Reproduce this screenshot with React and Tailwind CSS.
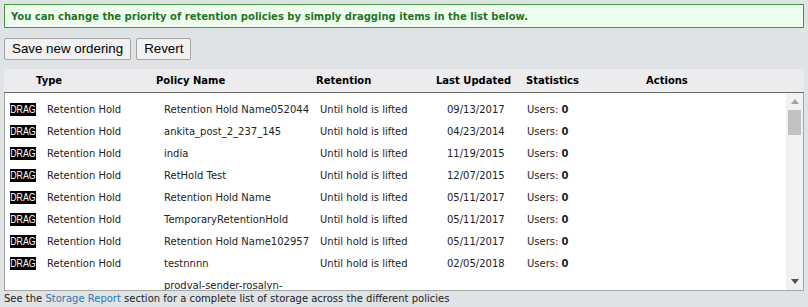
import React from "react";

const visibleRows = [
  { name: "Retention Hold Name052044", date: "09/13/2017" },
  { name: "ankita_post_2_237_145", date: "04/23/2014" },
  { name: "india", date: "11/19/2015" },
  { name: "RetHold Test", date: "12/07/2015" },
  { name: "Retention Hold Name", date: "05/11/2017" },
  { name: "TemporaryRetentionHold", date: "05/11/2017" },
  { name: "Retention Hold Name102957", date: "05/11/2017" },
  { name: "testnnnn", date: "02/05/2018" },
  { name: "prodval-sender-rosalyn-retention-hold-policy-for-all-users", date: "03/14/2018" },
];

const headers = [
  { label: "Type", w: "w-[120px]" },
  { label: "Policy Name", w: "w-[160px]" },
  { label: "Retention", w: "w-[120px]" },
  { label: "Last Updated", w: "w-[90px]" },
  { label: "Statistics", w: "w-[120px]" },
  { label: "Actions", w: "" },
];

const Row = ({ item }) => (
  <div className="flex items-center py-[4.5px] leading-[13px] text-[10px] text-[#222]">
    <div className="w-[42px] pl-[5px] shrink-0">
      <div className="w-[26px] h-[13px] bg-black text-white flex items-center justify-center overflow-hidden">
        <span className="font-['Liberation_Sans',sans-serif] text-[11px] leading-[13px] scale-x-[0.8] inline-block">
          DRAG
        </span>
      </div>
    </div>
    <div className="w-[117px] shrink-0">Retention Hold</div>
    <div className="w-[156px] shrink-0 pr-[8px] break-words">{item.name}</div>
    <div className="w-[127px] shrink-0">Until hold is lifted</div>
    <div className="w-[80px] shrink-0">{item.date}</div>
    <div className="flex-1">
      Users: <span className="font-bold">0</span>
    </div>
  </div>
);

const ScrollBar = () => (
  <div className="w-[17px] shrink-0 bg-[#f1f1f1] flex flex-col">
    <div className="h-[17px] flex items-center justify-center">
      <svg width="8" height="5" viewBox="0 0 8 5">
        <path d="M4 0 L8 5 L0 5 Z" fill="#a3a3a3" />
      </svg>
    </div>
    <div className="h-[25px] mx-[2px] bg-[#c1c1c1]" />
    <div className="flex-1" />
    <div className="h-[17px] flex items-center justify-center">
      <svg width="8" height="5" viewBox="0 0 8 5">
        <path d="M0 0 L8 0 L4 5 Z" fill="#505050" />
      </svg>
    </div>
  </div>
);

export default function App() {
  return (
    <div className="w-[808px] h-[307px] overflow-hidden bg-[#dfe3e6] font-['DejaVu_Sans',sans-serif] pt-[4px]">
      <div className="mx-[4px] h-[24px] border border-[#3d9a3d] bg-[#efffef] flex items-center pl-[6px] text-[10px] font-bold text-[#267226]">
        You can change the priority of retention policies by simply dragging items in the list below.
      </div>

      <div className="flex gap-[5px] mx-[4px] mt-[10px] font-['Liberation_Sans',sans-serif] text-[13.33px] text-black">
        <button className="h-[22px] px-[7px] border border-[#a5a5a5] bg-[#f1f1f1] rounded-[2px]">
          Save new ordering
        </button>
        <button className="h-[22px] px-[7px] border border-[#a5a5a5] bg-[#f1f1f1] rounded-[2px]">
          Revert
        </button>
      </div>

      <div className="mx-[4px] mt-[9px]">
        <div className="h-[24px] bg-[#ececee] border-b border-[#6b6b6b] flex items-center pl-[32px] text-[10px] font-bold text-black">
          {headers.map((h) => (
            <div key={h.label} className={`${h.w} shrink-0`}>
              {h.label}
            </div>
          ))}
        </div>
        <div className="h-[198px] bg-white border-x border-b border-[#a5a5a5] flex">
          <div className="flex-1 overflow-hidden pt-[5px]">
            {visibleRows.map((item, i) => (
              <Row key={i} item={item} />
            ))}
          </div>
          <ScrollBar />
        </div>
      </div>

      <div className="mx-[4px] text-[10px] leading-[14px] text-[#222] pt-[1px]">
        See the <span className="text-[#2f76b5]">Storage Report</span> section for a complete list of storage across the different policies
      </div>
    </div>
  );
}
